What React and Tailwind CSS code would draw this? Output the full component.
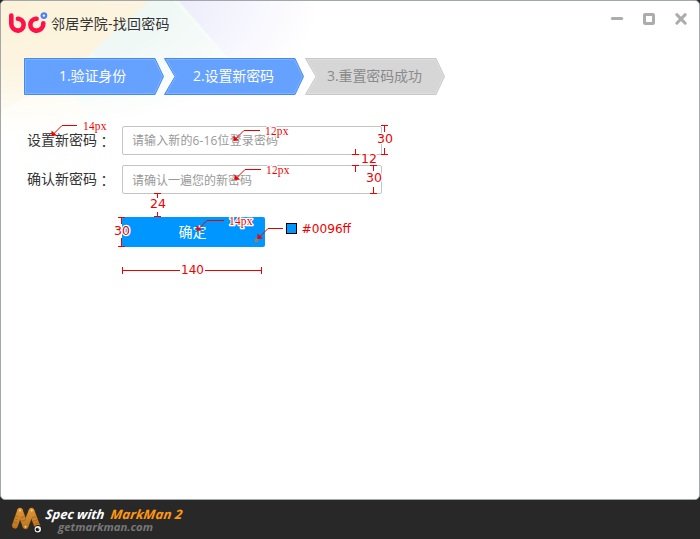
import React from 'react';

const CJK = "font-['Open_Sans','Noto_Sans_CJK_SC',sans-serif]";

function Logo() {
  return (
    <svg className="block h-[24px] w-[42px] shrink-0" viewBox="0 0 42 24" fill="none">
      <g stroke="#ff1048" strokeWidth="4.6" strokeLinecap="round">
        <path d="M3.3 5.6V14A6.8 6.6 0 0 0 10.1 20.6H10.4A6 6 0 0 0 10.4 8.7H9.9" />
        <path d="M28.6 8.7H27.6A6 6 0 0 0 27.6 20.6H28.6A6.7 6.6 0 0 0 35.3 14V13.2" />
      </g>
      <circle cx="35.9" cy="5.6" r="2.3" stroke="#4a80f8" strokeWidth="2.2" fill="#fff" />
    </svg>
  );
}

function WindowButtons() {
  return (
    <svg className="block h-[14px] w-[78px]" viewBox="0 0 78 14" fill="none" stroke="#acacac">
      <path d="M2.3 6.5H11.7" strokeWidth="3" strokeLinecap="round" />
      <rect x="34.5" y="2.5" width="9" height="9" rx=".6" strokeWidth="3" />
      <path d="M66.8 2.6L75.2 11.2M75.2 2.6L66.8 11.2" strokeWidth="3" strokeLinecap="round" />
    </svg>
  );
}

function Backdrop() {
  return (
    <svg className="absolute left-0 top-0 h-[180px] w-[340px]" viewBox="0 0 340 180">
      <defs>
        <radialGradient id="fade" gradientUnits="userSpaceOnUse" cx="0" cy="0" r="1" gradientTransform="scale(320 135)">
          <stop offset="0" stopColor="#fff" />
          <stop offset=".5" stopColor="#fff" stopOpacity=".8" />
          <stop offset=".75" stopColor="#fff" stopOpacity=".4" />
          <stop offset="1" stopColor="#fff" stopOpacity="0" />
        </radialGradient>
        <mask id="corner">
          <rect width="340" height="180" fill="url(#fade)" />
        </mask>
      </defs>
      <g mask="url(#corner)">
        <rect width="340" height="180" fill="#fdf8e6" />
        <path d="M0 0H150L65 75L0 110Z" fill="#fbf2d8" />
        <path d="M150 0H340V180H120L65 75Z" fill="#effaf1" />
        <path d="M150 0H178L225 55L340 90V0Z" fill="#e6e6fb" />
        <path d="M148 0H172L225 58L100 66L92 50Z" fill="#ebf6f3" />
      </g>
    </svg>
  );
}

function Step({ label, first, active, className }) {
  const outer = first ? '.5,.5 131,.5 139.5,18.5 131,36.5 .5,36.5' : '.5,.5 131,.5 139.5,18.5 131,36.5 .5,36.5 11,18.5';
  const inner = first ? '1.5,1.5 130.4,1.5 138.4,18.5 130.4,35.5 1.5,35.5' : '2.3,1.5 130.4,1.5 138.4,18.5 130.4,35.5 2.3,35.5 12,18.5';
  return (
    <div className="relative h-[37px] w-[141px] shrink-0">
      <svg className="absolute inset-0 h-[37px] w-[141px]" viewBox="0 0 141 37">
        <polygon points={outer} fill={active ? '#65a1ff' : '#d6d6d6'} stroke={active ? '#4489f3' : '#c8c8c8'} />
        <polygon points={inner} fill="none" stroke={active ? '#80b2ff' : '#dedede'} />
      </svg>
      <div className={'relative flex h-[35px] items-center whitespace-nowrap text-[14px] leading-[20px] tracking-[-0.1px] ' + className}>{label}</div>
    </div>
  );
}

function Field({ label, placeholder, className }) {
  return (
    <div className="flex h-[29px] items-center">
      <div className="flex w-[95px] shrink-0 whitespace-nowrap pb-[2px] text-[14px] leading-[20px] text-[#333]">
        {label}
        <span className="pt-[2px] leading-[18px] font-['Noto_Sans_CJK_TC',sans-serif]">：</span>
      </div>
      <div className={'flex h-[29px] w-[260px] items-center whitespace-nowrap rounded-[2px] border border-[#c4c4c4] bg-white pl-[9px] text-[12px] text-[#999] ' + className}>
        {placeholder}
      </div>
    </div>
  );
}

function Size({ x, y, width, children }) {
  return (
    <text x={x} y={y} textLength={width} lengthAdjust="spacingAndGlyphs" className="font-['DejaVu_Sans',sans-serif] text-[12.5px]" fill="#f00000" stroke="#fff" strokeWidth="2.5" strokeLinejoin="round" paintOrder="stroke">
      {children}
    </text>
  );
}

function FontNote({ x, y, children }) {
  return (
    <g className="font-['Liberation_Serif',serif] text-[11.5px]" fill="#f00000">
      <text x={x} y={y} textLength="23.5" stroke="#fff" strokeWidth="2.5" strokeLinejoin="round" paintOrder="stroke">
        {children}
      </text>
    </g>
  );
}

function Arrow({ x, y, bend, end }) {
  return (
    <g>
      <path d={`M${x} ${y}L${x + bend} ${y - bend}H${end}`} fill="none" stroke="#e60000" />
      <path d={`M${x - 0.5} ${y + 0.5}V${y - 5}L${x + 5} ${y}Z`} fill="#f00000" />
    </g>
  );
}

function Annotations() {
  return (
    <svg className="pointer-events-none absolute left-0 top-0 h-[300px] w-[400px]" viewBox="0 0 400 300">
      <Arrow x={52} y={135.5} bend={10} end={77} />
      <Arrow x={234} y={140.5} bend={10} end={260} />
      <Arrow x={235} y={179.5} bend={10} end={261} />
      <Arrow x={197} y={230.5} bend={10} end={224} />
      <Arrow x={258} y={238.5} bend={10} end={283} />
      <g stroke="#f00000" fill="none">
        <path d="M381 125.5H388M384.5 126V132M384.5 148V154M381 154.5H388" />
        <path d="M352 154.5H359M355.5 149V154M352 165.5H359M355.5 166V172" />
        <path d="M370 165.5H377M373.5 166V171M373.5 187V193M370 193.5H377" />
        <path d="M154 193.5H161M157.5 194V198M157.5 212V216M154 216.5H161" />
        <path d="M118 217.5H125M121.5 218V224M121.5 238V246M118 246.5H125" />
        <path d="M122.5 267V274M261.5 267V274M123 270.5H180M205 270.5H261" />
      </g>
      <FontNote x={83} y={130}>14px</FontNote>
      <FontNote x={265} y={135}>12px</FontNote>
      <FontNote x={266} y={174}>12px</FontNote>
      <FontNote x={229} y={225}>14px</FontNote>
      <Size x={377} y={143} width={16}>30</Size>
      <Size x={361} y={163} width={16}>12</Size>
      <Size x={366} y={182} width={16}>30</Size>
      <Size x={150} y={208} width={16}>24</Size>
      <Size x={114} y={235} width={16}>30</Size>
      <Size x={181} y={274} width={23}>140</Size>
      <Size x={301.5} y={233} width={49.5}>#0096ff</Size>
      <rect x="286.5" y="223.5" width="10" height="10" fill="#0096ff" stroke="#000" />
      <rect x="255.5" y="239.5" width="2" height="2" fill="#0096ff" stroke="#e07020" />
    </svg>
  );
}

function Mascot() {
  return (
    <svg className="block h-[32px] w-[34px] shrink-0" viewBox="0 0 34 32" fill="none">
      <defs>
        <linearGradient id="skin" gradientUnits="userSpaceOnUse" x1="0" y1="3" x2="0" y2="28">
          <stop offset="0" stopColor="#e29a38" />
          <stop offset="1" stopColor="#b36d1c" />
        </linearGradient>
      </defs>
      <g strokeLinecap="round" strokeWidth="6.6" stroke="#5e390d">
        <path d="M5 21.5L10 7M21.5 7L15.5 22M10 7L15.5 22M21.5 7L28 24" />
      </g>
      <g strokeLinecap="round" strokeWidth="5.6" stroke="url(#skin)">
        <path d="M5 21.5L10 7" />
        <path d="M21.5 7L15.5 22" />
        <path d="M10 7L15.5 22" />
        <path d="M21.5 7L28 24" />
      </g>
      <g stroke="#8f5915" strokeWidth=".6">
        <path d="M5 11.5L8.4 12.8M4 14.4L7.8 15.8M3 17.5L7 19M10.5 14L14.8 12.3M11.8 17.2L16 15.6M22 14L26.6 12.3M23.3 17.2L27.9 15.5M24.6 20.2L29 18.6" />
      </g>
      <g fill="#ffe08b">
        <circle cx="10" cy="6.6" r="1" />
        <circle cx="21.7" cy="6.6" r="1" />
        <circle cx="15.5" cy="22.8" r="1" />
      </g>
      <circle cx="28" cy="25.2" r="4.2" fill="#1b1b1b" />
      <circle cx="27.8" cy="25.2" r="3.2" fill="#eee" />
      <circle cx="27.5" cy="25.5" r="1.8" fill="#111" />
      <circle cx="28.2" cy="24.8" r=".5" fill="#fff" />
    </svg>
  );
}

export default function App() {
  return (
    <div className={'relative flex h-[539px] w-[700px] flex-col overflow-hidden bg-[#282828] ' + CJK}>
      <main className="relative h-[500px] overflow-hidden rounded-[5px] border border-[#a3a7aa] bg-white">
        <Backdrop />
        <header className="relative flex h-[57px] items-start justify-between pl-[7px] pr-[11px]">
          <div className="flex items-start pt-[9px]">
            <Logo />
            <h1 className="ml-[1px] mt-[4px] whitespace-nowrap text-[14px] leading-[20px] tracking-[0.25px] text-[#333]">邻居学院-找回密码</h1>
          </div>
          <div className="pt-[11px]"><WindowButtons /></div>
        </header>
        <nav className="relative flex pl-[23px]">
          <Step label="1.验证身份" first active className="pl-[35px] text-white" />
          <div className="-ml-px flex">
            <Step label="2.设置新密码" active className="pl-[29px] text-white" />
            <Step label="3.重置密码成功" className="pl-[22px] text-[#8a8a8a]" />
          </div>
        </nav>
        <form className="relative flex flex-col gap-[10px] pl-[26px] pt-[31px]">
          <Field label="设置新密码" placeholder="请输入新的6-16位登录密码" className="tracking-[0.12px]" />
          <Field label="确认新密码" placeholder="请确认一遍您的新密码" className="pt-[2px]" />
          <button type="button" className="ml-[95px] mt-[13px] h-[30px] w-[143px] rounded-[2px] bg-[#0096ff] pr-[2px] text-[14px] leading-[30px] text-white">确定</button>
        </form>
      </main>
      <footer className="flex h-[39px] items-start pl-[10px] pt-[4px]">
        <Mascot />
        <svg className="block h-[35px] w-[150px]" viewBox="0 0 150 35">
          <g className="font-['Open_Sans',sans-serif] font-bold italic">
            <g transform="translate(1 14.5) skewX(-7)">
              <text textLength="59" lengthAdjust="spacingAndGlyphs" className="text-[13px]" fill="#fff">Spec with</text>
              <text x="65" textLength="72" lengthAdjust="spacingAndGlyphs" className="text-[13px]" fill="#ff9711">MarkMan 2</text>
            </g>
            <text x="14" y="26.5" textLength="95" lengthAdjust="spacingAndGlyphs" className="text-[11px]" fill="#777">getmarkman.com</text>
          </g>
        </svg>
      </footer>
      <Annotations />
    </div>
  );
}
